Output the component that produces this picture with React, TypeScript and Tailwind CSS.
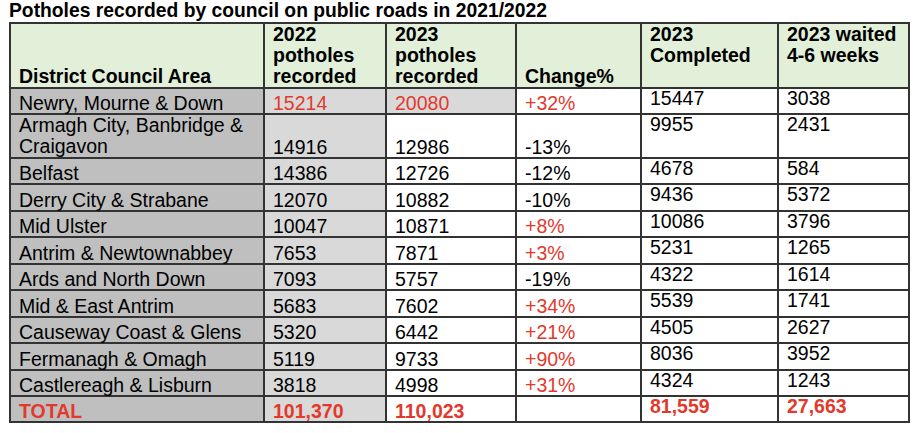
import React from "react";

type Row = {
  area: React.ReactNode;
  y2022: string;
  y2023: string;
  change: string;
  completed: string;
  waited: string;
  tall?: boolean;
  hot?: boolean;
};

const rows: Row[] = [
  { area: "Newry, Mourne & Down", y2022: "15214", y2023: "20080", change: "+32%", completed: "15447", waited: "3038", hot: true },
  {
    area: (
      <>
        Armagh City, Banbridge &amp;
        <br />
        Craigavon
      </>
    ),
    y2022: "14916",
    y2023: "12986",
    change: "-13%",
    completed: "9955",
    waited: "2431",
    tall: true,
  },
  { area: "Belfast", y2022: "14386", y2023: "12726", change: "-12%", completed: "4678", waited: "584" },
  { area: "Derry City & Strabane", y2022: "12070", y2023: "10882", change: "-10%", completed: "9436", waited: "5372" },
  { area: "Mid Ulster", y2022: "10047", y2023: "10871", change: "+8%", completed: "10086", waited: "3796" },
  { area: "Antrim & Newtownabbey", y2022: "7653", y2023: "7871", change: "+3%", completed: "5231", waited: "1265" },
  { area: "Ards and North Down", y2022: "7093", y2023: "5757", change: "-19%", completed: "4322", waited: "1614" },
  { area: "Mid & East Antrim", y2022: "5683", y2023: "7602", change: "+34%", completed: "5539", waited: "1741" },
  { area: "Causeway Coast & Glens", y2022: "5320", y2023: "6442", change: "+21%", completed: "4505", waited: "2627" },
  { area: "Fermanagh & Omagh", y2022: "5119", y2023: "9733", change: "+90%", completed: "8036", waited: "3952" },
  { area: "Castlereagh & Lisburn", y2022: "3818", y2023: "4998", change: "+31%", completed: "4324", waited: "1243" },
];

const cell = "border-2 border-[#333] pl-[8px] pr-[4px] leading-[19px]";
const head = "border-2 border-[#333] pl-[8px] pr-[4px] leading-[21px] text-left";
const red = "text-[#e2392d]";

export default function App() {
  return (
    <div className="h-[433px] w-[920px] overflow-hidden bg-white text-black [font-family:'Liberation_Sans',Arial,sans-serif]">
      <h1 className="pl-[9px] text-[19.3px] font-bold leading-[22px]">
        Potholes recorded by council on public roads in 2021/2022
      </h1>
      <table className="ml-[9px] table-fixed border-collapse text-[19.5px]" style={{ width: 899 }}>
        <colgroup>
          <col className="w-[254px]" />
          <col className="w-[122px]" />
          <col className="w-[130px]" />
          <col className="w-[125px]" />
          <col className="w-[137px]" />
          <col className="w-[131px]" />
        </colgroup>
        <thead>
          <tr className="h-[64px] bg-[#e2efd9] font-bold">
            <th className={head + " align-bottom"}>District Council Area</th>
            <th className={head + " align-bottom"}>
              2022
              <br />
              potholes
              <br />
              recorded
            </th>
            <th className={head + " align-bottom"}>
              2023
              <br />
              potholes
              <br />
              recorded
            </th>
            <th className={head + " align-bottom"}>Change%</th>
            <th className={head + " align-top"}>
              2023
              <br />
              Completed
            </th>
            <th className={head + " align-top"}>
              2023 waited
              <br />
              4-6 weeks
            </th>
          </tr>
        </thead>
        <tbody>
          {rows.map((r, i) => (
            <tr key={i} className={r.tall ? "h-[43px]" : i % 2 === 0 ? "h-[26px]" : "h-[27px]"}>
              <td className={cell + " bg-[#bfbfbf] align-bottom" + (r.tall ? " leading-[21px]" : "")}>{r.area}</td>
              <td className={cell + " bg-[#d9d9d9] align-bottom" + (r.hot ? " " + red : "")}>{r.y2022}</td>
              <td className={cell + " align-bottom" + (r.hot ? " bg-[#d9d9d9] " + red : "")}>{r.y2023}</td>
              <td className={cell + " align-bottom" + (r.change.startsWith("+") ? " " + red : "")}>{r.change}</td>
              <td className={cell + " align-top"}>{r.completed}</td>
              <td className={cell + " align-top"}>{r.waited}</td>
            </tr>
          ))}
          <tr className="h-[26px] font-bold text-[#e2392d]">
            <td className={cell + " bg-[#bfbfbf] align-bottom"}>TOTAL</td>
            <td className={cell + " bg-[#d9d9d9] align-bottom"}>101,370</td>
            <td className={cell + " align-bottom"}>110,023</td>
            <td className={cell + " align-bottom"}></td>
            <td className={cell + " align-top"}>81,559</td>
            <td className={cell + " align-top"}>27,663</td>
          </tr>
        </tbody>
      </table>
    </div>
  );
}
